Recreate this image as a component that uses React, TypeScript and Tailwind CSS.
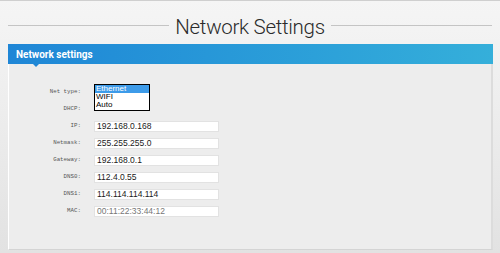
const rows: { label: string; value?: string; muted?: boolean }[] = [
  { label: 'IP:', value: '192.168.0.168' },
  { label: 'Netmask:', value: '255.255.255.0' },
  { label: 'Gateway:', value: '192.168.0.1' },
  { label: 'DNS0:', value: '112.4.0.55' },
  { label: 'DNS1:', value: '114.114.114.114' },
  { label: 'MAC:', value: '00:11:22:33:44:12', muted: true },
];

function Label({ text }: { text: string }) {
  return (
    <div className="w-[72px] shrink-0 text-right text-[5.8px] text-[#555] font-['Liberation_Mono',monospace]">
      {text}
    </div>
  );
}

export default function App() {
  return (
    <div className="w-[500px] h-[253px] overflow-hidden bg-gradient-to-b from-[#f5f5f5] via-[#ececec] to-[#e2e2e2] border-t border-[#cfcfcf] font-['Liberation_Sans',Arial,sans-serif]">
      {/* page title */}
      <div className="flex items-center h-[43px] px-2 pt-[6px]">
        <div className="flex-1 h-px bg-[#c4c4c4]" />
        <h1 className="px-[6px] pt-[3px] text-[20.5px] font-light text-[#2a2a2a] tracking-[-0.3px] font-['Roboto',sans-serif] leading-none">
          Network Settings
        </h1>
        <div className="flex-1 h-px bg-[#c4c4c4]" />
      </div>

      <div className="mx-2 mr-[7px]">
        {/* blue header */}
        <div className="relative h-[20px] flex items-center pl-2 bg-gradient-to-r from-[#1f86d6] to-[#35afda]">
          <span className="text-[10px] font-bold text-white font-['Roboto',sans-serif]">
            Network settings
          </span>
          <span className="absolute left-[25px] top-full w-0 h-0 border-x-[3px] border-x-transparent border-t-[3px] border-t-[#1f86d6]" />
        </div>

        {/* panel */}
        <div className="h-[186px] bg-[#ededed] border-l border-white border-r-2 border-r-[#dcdcdc] border-b border-b-[#d4d4d4] pt-5">
          <div className="flex items-center h-[17px] gap-[13px]">
            <Label text="Net type:" />
            <div className="h-[17px] flex items-start">
              <div className="w-[56px] h-[27px] bg-white border border-black text-[8px] leading-[8px] text-black">
                <div className="bg-[#3d9be9] text-white pl-[1px]">Ethernet</div>
                <div className="pl-[1px]">WIFI</div>
                <div className="pl-[1px]">Auto</div>
              </div>
            </div>
          </div>
          <div className="flex items-center h-[17px] gap-[13px]">
            <Label text="DHCP:" />
          </div>
          {rows.map((r) => (
            <div key={r.label} className="flex items-center h-[17px] gap-[13px]">
              <Label text={r.label} />
              <div
                className={`w-[125px] h-[11px] bg-white border border-[#e2e2e2] pl-[2px] flex items-center text-[8.5px] leading-none ${
                  r.muted ? 'text-[#777]' : 'text-[#1a1a1a]'
                }`}
              >
                {r.value}
              </div>
            </div>
          ))}
        </div>
      </div>
    </div>
  );
}
